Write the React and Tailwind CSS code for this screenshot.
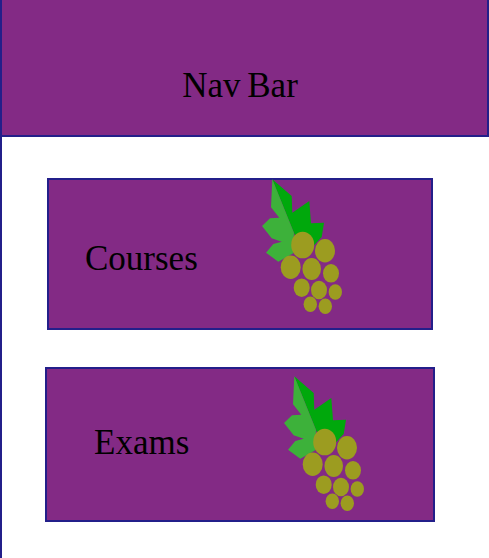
const GRAPES = [
  [52.7, 75, 11.5, 13.3],
  [75, 80.7, 10, 11.7],
  [40.7, 97.3, 10, 11.7],
  [61.7, 99, 9.3, 11],
  [81, 103.3, 8, 9.3],
  [51.7, 117.7, 8, 9.3],
  [69, 120, 8, 9.3],
  [85.3, 122, 6.7, 7.7],
  [60.3, 134.3, 6.7, 7.7],
  [75.3, 136.3, 6.7, 7.7],
];

function Grapes({ className }) {
  return (
    <svg viewBox="0 0 110 160" width="110" height="160" className={className}>
      <polygon
        points="22.3,9.3 41.7,26 42.3,42.7 59.3,31 61,53.3 74,52.7 71.7,67 55,85 44,63"
        fill="#00a80c"
      />
      <polygon
        points="22.3,9.3 21,37.3 29.3,47.7 20,48.3 12,56 21.7,68.3 31.7,71.7 23.3,74 16,82.7 28.3,91.7 43.3,83.3 44,63"
        fill="#3db13a"
      />
      {GRAPES.map(([cx, cy, rx, ry]) => (
        <ellipse key={`${cx}-${cy}`} cx={cx} cy={cy} rx={rx} ry={ry} fill="#9c9c20" />
      ))}
    </svg>
  );
}

export default function App() {
  return (
    <div className="h-[558px] overflow-hidden bg-white font-['Liberation_Serif',serif] text-[35px] leading-[40px] text-black">
      {/* Nav */}
      <div className="box-border flex h-[137px] w-[489px] justify-center border-2 border-t-0 border-[#231f8a] bg-[#832a85] pt-[66px] pr-[9px] [word-spacing:-2px]">
        Nav Bar
      </div>

      <div className="box-border h-[421px] border-l-2 border-[#231f8a] pt-[41px]">
        {/* Courses */}
        <div className="ml-[45px] box-border flex h-[152px] w-[386px] items-start border-2 border-[#231f8a] bg-[#832a85]">
          <span className="mt-[59px] ml-[36px] w-[165px]">Courses</span>
          <Grapes className="-mt-[10px] overflow-hidden" />
        </div>

        {/* Exams */}
        <div className="mt-[37px] ml-[43px] box-border flex h-[155px] w-[390px] items-start border-2 border-[#231f8a] bg-[#832a85]">
          <span className="mt-[54px] ml-[47px] w-[178px]">Exams</span>
          <Grapes className="-mt-[2px] overflow-hidden" />
        </div>
      </div>
    </div>
  );
}
